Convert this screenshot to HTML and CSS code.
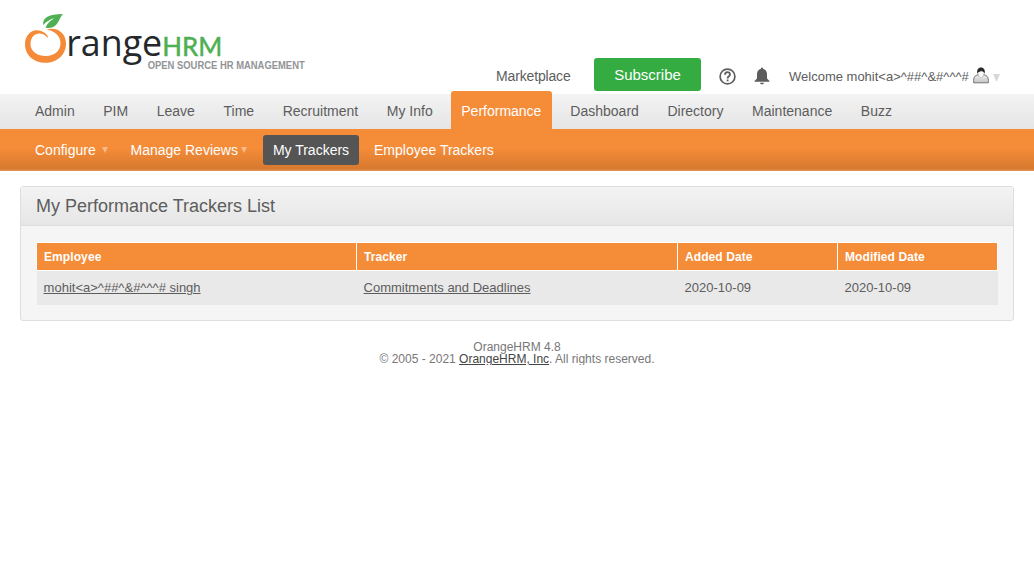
FILE: index.html
```html
<!DOCTYPE html>
<html lang="en">
<head>
<meta charset="utf-8">
<title>OrangeHRM</title>
<link rel="stylesheet" href="styles.css">
</head>
<body>
<header class="branding">
  <svg class="logo" width="290" height="75" viewBox="20 5 290 75" role="img" aria-label="OrangeHRM">
    <path fill="#f58b38" d="M47.8 38C49 34.5 42 29.5 35.5 30.2C29.5 30.8 25 37 25 44.2C25 55.2 34 62.8 45.5 62.8C57.5 62.8 66 54.5 66 43.5C66 33 57.3 26.3 46.4 29.5C53.5 30.5 60.5 35.3 60.5 43C60.5 51.2 54.2 56 46 56C37.2 56 30.5 51.5 30.5 44C30.5 33.5 41 29.5 47.8 38Z"/>
    <path fill="#4fb053" d="M43.2 25.2C42.3 17.3 49 14 63 14C58.5 18.5 58.8 26.8 49.5 28C48 28.2 46.5 27.9 45.5 27.4C47.5 23.4 50.5 20.3 54.5 18C49.5 19.6 46 21.8 43.2 25.2Z"/>
    <text class="logo-name" x="66.2" y="56.3" textLength="96" lengthAdjust="spacingAndGlyphs">range</text>
    <text class="logo-hrm" x="162.3" y="56.3" textLength="60" lengthAdjust="spacingAndGlyphs">HRM</text>
    <text class="logo-tag" x="147.7" y="69" textLength="157" lengthAdjust="spacingAndGlyphs">OPEN SOURCE HR MANAGEMENT</text>
  </svg>
  <div class="tools">
    <a class="market">Marketplace</a>
    <a class="subscribe">Subscribe</a>
    <svg class="help" width="17" height="17" viewBox="0 0 17 17"><circle cx="8.5" cy="8.5" r="7.4" fill="none" stroke="#5d5d5d" stroke-width="1.7"/><path d="M6 6.8C6 3.4 11 3.4 11 6.5C11 8.3 8.6 8.3 8.6 10.4" fill="none" stroke="#5d5d5d" stroke-width="1.8"/><rect x="7.7" y="11.5" width="1.8" height="1.8" fill="#5d5d5d"/></svg>
    <svg class="bell" width="16" height="18" viewBox="0 0 16 18"><path fill="#5d5d5d" d="M7 1.7C7 .2 9 .2 9 1.7C11.7 2.3 13 4.5 13 7V11.5L15.5 14V14.8H.5V14L3 11.5V7C3 4.5 4.3 2.3 7 1.7ZM6 15.7H10C9.8 17.8 6.2 17.8 6 15.7Z"/></svg>
    <span class="welcome">Welcome mohit&lt;a&gt;^##^&amp;#^^^#</span>
    <svg class="user" width="16" height="17" viewBox="0 0 16 17">
      <defs><linearGradient id="coat" x2="0" y2="1"><stop stop-color="#eeeeee"/><stop offset="1" stop-color="#c4c4c4"/></linearGradient></defs>
      <path d="M.6 15.8V13.5C.6 10 2.2 8.2 5 7.8H11C13.8 8.2 15.4 10 15.4 13.5V15.8Z" fill="url(#coat)" stroke="#777"/>
      <path d="M4.8 4.5C4.8 8 6.4 10.5 8 10.5S11.2 8 11.2 4.5Z" fill="#fafafa" stroke="#999" stroke-width=".5"/>
      <path d="M4.4 6.8C3.5 2.8 5.2.5 8 .5S12.5 2.8 11.6 6.8C11.3 5 10 4.6 8.3 3.8C7 4.8 4.9 4.8 4.4 6.8Z" fill="#292929"/>
    </svg>
    <span class="user-arrow"></span>
  </div>
</header>
<nav class="menu">
  <a>Admin</a><a>PIM</a><a>Leave</a><a>Time</a><a>Recruitment</a><a>My Info</a><a class="current">Performance</a><a>Dashboard</a><a>Directory</a><a>Maintenance</a><a>Buzz</a>
</nav>
<nav class="submenu">
  <a class="configure">Configure<i class="arrow"></i></a>
  <a class="reviews">Manage Reviews<i class="arrow"></i></a>
  <a class="selected">My Trackers</a>
  <a class="employees">Employee Trackers</a>
</nav>
<main class="box">
  <h1>My Performance Trackers List</h1>
  <div class="inner">
    <table>
      <colgroup><col class="wide"><col class="wide"><col class="date"><col class="date"></colgroup>
      <thead><tr><th>Employee</th><th>Tracker</th><th>Added Date</th><th>Modified Date</th></tr></thead>
      <tbody><tr><td><a>mohit&lt;a&gt;^##^&amp;#^^^# singh</a></td><td><a>Commitments and Deadlines</a></td><td>2020-10-09</td><td>2020-10-09</td></tr></tbody>
    </table>
  </div>
</main>
<footer>OrangeHRM 4.8<br>© 2005 - 2021 <a>OrangeHRM, Inc</a>. All rights reserved.</footer>
</body>
</html>
```
FILE: styles.css
```css
* { box-sizing: border-box; }
body { margin: 0; background: #fff; color: #5d5d5d; font: 14px/16px "Liberation Sans", Arial, sans-serif; }
svg { display: block; flex: none; overflow: visible; }
.branding { display: flex; justify-content: space-between; height: 94px; padding: 5px 34px 0 20px; }
.logo-name { font: 36.5px "Open Sans", sans-serif; fill: #25282a; }
.logo-hrm { font: 500 27px Lato, sans-serif; fill: #4fb053; stroke: #4fb053; stroke-width: .3px; }
.logo-tag { font: bold 10.5px "Liberation Sans", sans-serif; fill: #929497; }
.tools { display: flex; align-items: center; height: 33px; margin-top: 53px; white-space: nowrap; }
.market { width: 98px; padding-top: 3px; letter-spacing: -.15px; }
.subscribe { width: 107px; height: 33px; border-radius: 3px; background: #34ac41; color: #fff; font-size: 15px; line-height: 33px; text-align: center; }
.help { margin: 4px 0 0 18px; }
.bell { margin: 3px 0 0 17.5px; }
.welcome { width: 180px; margin-left: 19.5px; padding-top: 4px; font-size: 13px; }
.user { margin: 2px 0 0 4px; }
.user-arrow { width: 7px; margin: 5px 0 0 4px; border: solid transparent; border-width: 7px 3.5px 0; border-top-color: #d8d8d8; }
.menu { display: flex; gap: 8.6px; height: 35px; padding-left: 25px; background: linear-gradient(#f3f3f3, #e5e5e5); line-height: 34px; }
.menu a { padding: 0 10px; }
.menu .current { height: 38px; width: 101px; margin: -3px -.5px 0 0; padding-top: 3px; border-radius: 3px 3px 0 0; background: #f58c38; color: #fff; }
.submenu { display: flex; height: 42px; padding: 6px 0 0 35px; background: linear-gradient(#f58c38 45%, #d7792f 95%, #e39b61); color: #fff; line-height: 30px; white-space: nowrap; }
.configure, .reviews { display: flex; justify-content: space-between; align-items: center; height: 30px; }
.configure { width: 73px; margin-right: 22.5px; }
.reviews { width: 116px; margin-right: 16.5px; }
.arrow { border: solid transparent; border-width: 6px 3px 0; border-top-color: #f9ba87; }
.selected { width: 96px; height: 30px; border-radius: 3px; background: #555; text-align: center; }
.employees { margin-left: 15px; }
.box { height: 135px; margin: 15px 20px 0; border: 1px solid #dedede; border-radius: 3px; background: #f5f5f5; }
h1 { height: 39px; margin: 0; padding-left: 15px; border-bottom: 1px solid #dedede; background: linear-gradient(#f3f3f3, #e6e6e6); font-size: 18px; font-weight: 400; line-height: 38px; }
.inner { padding: 16px 15px 0; }
table { width: 962px; border-spacing: 0; table-layout: fixed; font-size: 13px; }
.wide { width: 321px; }
.date { width: 160px; }
th { height: 29px; padding: 0 0 0 7px; border: solid #fff; border-width: 1px 1px 1px 0; background: #f58c38; color: #fff; font-size: 12px; letter-spacing: .09px; text-align: left; }
th:first-child { border-left-width: 1px; }
td { height: 34px; padding: 0 0 0 6.6px; background: #e9e9e9; }
td:first-child { border-left: 1px solid #f5f5f5; }
td a, footer a { text-decoration: underline; }
footer { margin-top: 20px; color: #777; font-size: 12px; line-height: 12px; text-align: center; }
footer a { color: #444; }
```
